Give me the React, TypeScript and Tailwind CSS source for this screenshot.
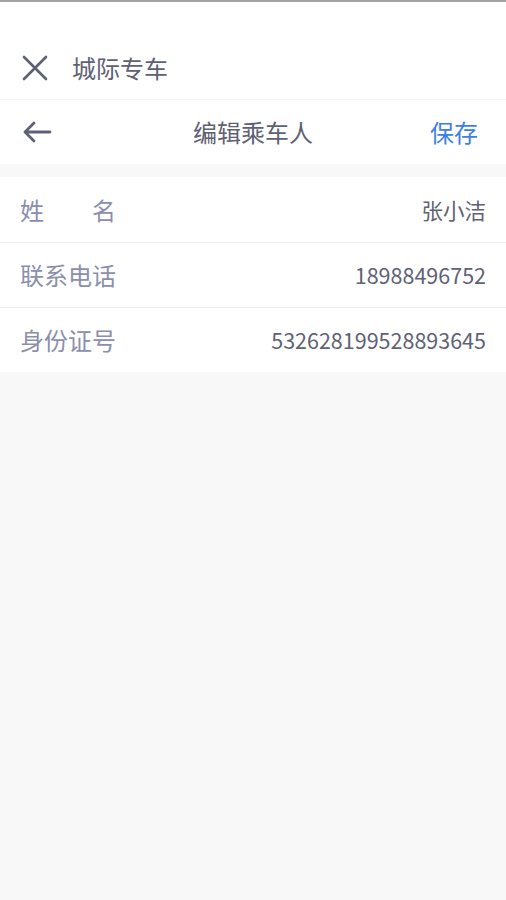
import React from "react";

const rows = [
  { label: "姓\u3000\u3000名", value: "张小洁" },
  { label: "联系电话", value: "18988496752" },
  { label: "身份证号", value: "532628199528893645" },
];

const App: React.FC = () => {
  return (
    <div
      className="min-h-[900px] bg-[#f8f8f8]"
      style={{ fontFamily: '"Noto Sans CJK SC", "Noto Sans", sans-serif' }}
    >
      <div className="h-[2px] bg-[#a3a3a3]" />

      <div className="bg-white pt-[34px]">
        <div className="flex h-[63px] items-center px-[22px]">
          <svg width="26" height="26" viewBox="0 0 26 26" fill="none">
            <path d="M2 2 L24 24 M24 2 L2 24" stroke="#5e6174" strokeWidth="2.6" strokeLinecap="round" />
          </svg>
          <span className="ml-[24px] text-[24px] leading-none text-[#5e6174]">城际专车</span>
        </div>
      </div>

      <div className="flex h-[65px] items-center border-t border-[#f6f6f6] bg-white px-[20px]">
        <div className="flex flex-1 basis-0">
          <svg width="30" height="24" viewBox="0 0 30 24" fill="none" className="ml-[2px]">
            <path
              d="M3 12 H28 M12 3 L3 12 L12 21"
              stroke="#5e6174"
              strokeWidth="2.8"
              strokeLinecap="round"
              strokeLinejoin="round"
            />
          </svg>
        </div>
        <span className="text-[24px] leading-none text-[#5e6174]">编辑乘车人</span>
        <div className="flex flex-1 basis-0 justify-end">
          <span className="mr-[8px] text-[24px] leading-none text-[#3d7ee8]">保存</span>
        </div>
      </div>

      <div className="mt-[13px] bg-white">
        {rows.map((row, idx) => (
          <div
            key={row.label}
            className={`flex h-[65px] items-center justify-between px-[20px] ${
              idx > 0 ? "border-t border-[#f0f0f0]" : ""
            }`}
          >
            <span className="text-[24px] leading-none text-[#8a8fad]">{row.label}</span>
            <span className="text-[21.5px] leading-none text-[#5f6275]">{row.value}</span>
          </div>
        ))}
      </div>
    </div>
  );
};

export default App;
